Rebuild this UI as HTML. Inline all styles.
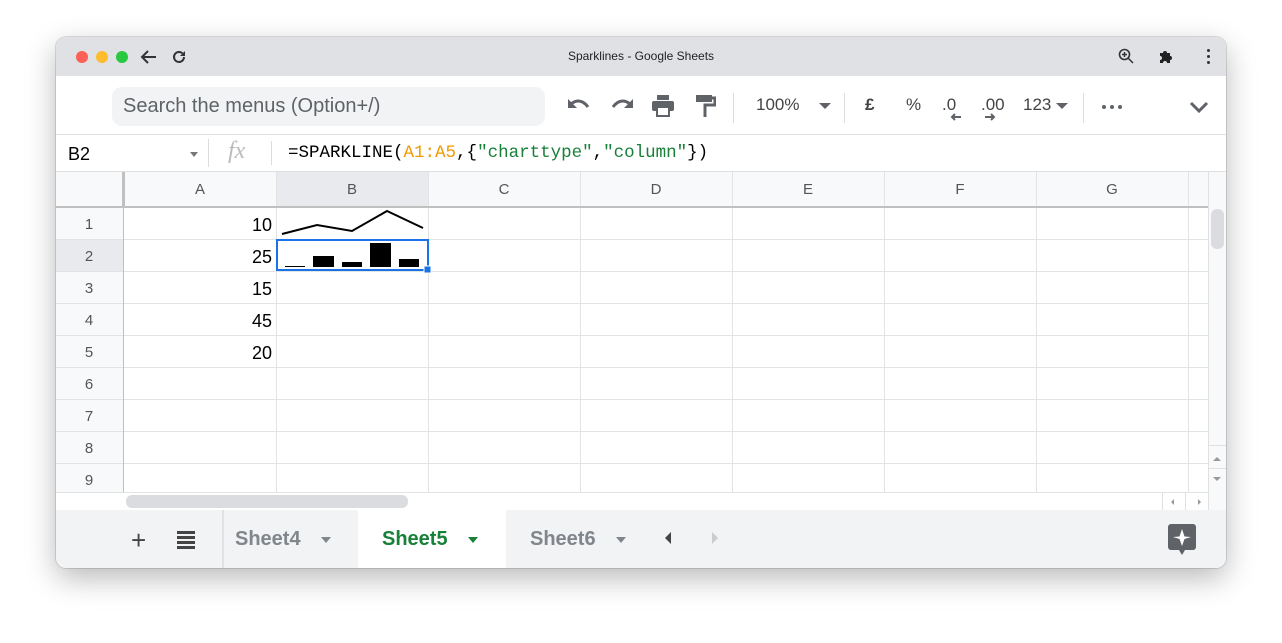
<!DOCTYPE html>
<html><head><meta charset="utf-8"><style>
*{margin:0;padding:0;box-sizing:border-box}
body{width:1282px;height:643px;background:#fff;font-family:"Liberation Sans",Arial,sans-serif;position:relative;overflow:hidden}
.win{position:absolute;left:56px;top:37px;width:1170px;height:531px;border-radius:10px;overflow:hidden;background:#fff;box-shadow:0 10px 30px rgba(0,0,0,.28),0 0 0 1px rgba(0,0,0,.12)}
.a{position:absolute}
.title{left:0;top:0;width:1170px;height:39px;background:#dfe1e5}
.tb{color:#444;font-size:17px}
.cell{position:absolute;font-size:18px;color:#000;text-align:right}
.rh{position:absolute;left:0;width:66px;text-align:center;font-size:15px;color:#555}
.ch{position:absolute;top:144px;font-size:15px;color:#555;text-align:center;width:152px}
</style></head><body>
<div class="win">
 <div class="a title"></div>
 <div class="a" style="left:20px;top:14px;width:12px;height:12px;border-radius:50%;background:#fe5f57"></div>
 <div class="a" style="left:40px;top:14px;width:12px;height:12px;border-radius:50%;background:#febc2e"></div>
 <div class="a" style="left:60px;top:14px;width:12px;height:12px;border-radius:50%;background:#28c840"></div>
 <svg class="a" style="left:84px;top:11px" width="18" height="18" viewBox="0 0 18 18"><path d="M16 9H3M8 3L2 9l6 6" stroke="#333" stroke-width="2" fill="none"/></svg>
 <svg class="a" style="left:114px;top:11px" width="18" height="18" viewBox="0 0 18 18"><path d="M14 9a5 5 0 1 1-1.5-3.6" stroke="#333" stroke-width="2" fill="none"/><path d="M15 3v5h-5z" fill="#333"/></svg>
 <div class="a" style="left:0;width:1170px;top:12px;text-align:center;font-size:12px;color:#222">Sparklines - Google Sheets</div>
 <svg class="a" style="left:1062px;top:11px" width="16" height="16" viewBox="0 0 16 16"><circle cx="6.5" cy="6.5" r="5" stroke="#333" stroke-width="1.6" fill="none"/><path d="M10 10l5 5M6.5 4v5M4 6.5h5" stroke="#333" stroke-width="1.5"/></svg>
 <svg class="a" style="left:1102px;top:11px" width="16" height="16" viewBox="0 0 16 16"><path d="M2 5h3a2 2 0 1 1 4 0h3v3a2 2 0 1 1 0 4v3H9a2 2 0 1 0-4 0H2v-3a2 2 0 1 0 0-4z" fill="#222"/></svg>
 <div class="a" style="left:1151px;top:12px;width:3px;height:3px;background:#333;border-radius:50%;box-shadow:0 6px 0 #333,0 12px 0 #333"></div>
 <div class="a" style="left:0;top:39px;width:1170px;height:59px;background:#fff;border-bottom:1px solid #e0e0e0"></div>
 <div class="a" style="left:56px;top:50px;width:433px;height:39px;background:#f1f3f4;border-radius:10px;font-size:20px;color:#5f6368;padding:8px 11px">Search the menus (Option+/)</div>
 <svg class="a" style="left:510px;top:58px" width="26" height="20" viewBox="0 0 26 20"><path d="M4 10c6-6 13-5 18 2" stroke="#5f6368" stroke-width="3" fill="none"/><path d="M2 4v9h9z" fill="#5f6368"/></svg>
 <svg class="a" style="left:553px;top:58px" width="26" height="20" viewBox="0 0 26 20"><path d="M22 10c-6-6-13-5-18 2" stroke="#5f6368" stroke-width="3" fill="none"/><path d="M24 4v9h-9z" fill="#5f6368"/></svg>
 <svg class="a" style="left:595px;top:58px" width="24" height="22" viewBox="0 0 24 22"><rect x="6" y="0" width="12" height="5" fill="#5f6368"/><rect x="1" y="6" width="22" height="10" rx="2" fill="#5f6368"/><rect x="6" y="12" width="12" height="9" fill="#fff" stroke="#5f6368" stroke-width="2"/></svg>
 <svg class="a" style="left:638px;top:57px" width="22" height="24" viewBox="0 0 22 24"><rect x="2" y="1" width="16" height="7" fill="#5f6368"/><path d="M18 4h3v7h-10v12" stroke="#5f6368" stroke-width="3" fill="none"/></svg>
 <div class="a" style="left:677px;top:56px;width:1px;height:30px;background:#dadce0"></div>
 <div class="a tb" style="left:700px;top:58px">100%</div>
 <div class="a" style="left:763px;top:66px;border:6px solid transparent;border-top:6px solid #5f6368"></div>
 <div class="a" style="left:788px;top:56px;width:1px;height:30px;background:#dadce0"></div>
 <div class="a tb" style="left:809px;top:58px;font-weight:bold">£</div>
 <div class="a tb" style="left:850px;top:58px">%</div>
 <div class="a tb" style="left:886px;top:58px">.0</div>
 <div class="a tb" style="left:925px;top:58px">.00</div>
 <svg class="a" style="left:893px;top:75px" width="50" height="10" viewBox="0 0 50 10"><path d="M12 5H3M6 2L3 5l3 3" stroke="#5f6368" stroke-width="2" fill="none"/><path d="M36 5h9M42 2l3 3-3 3" stroke="#5f6368" stroke-width="2" fill="none"/></svg>
 <div class="a tb" style="left:967px;top:58px">123</div>
 <div class="a" style="left:1000px;top:66px;border:6px solid transparent;border-top:6px solid #5f6368"></div>
 <div class="a" style="left:1027px;top:56px;width:1px;height:30px;background:#dadce0"></div>
 <div class="a" style="left:1046px;top:68px;width:4px;height:4px;border-radius:50%;background:#5f6368;box-shadow:8px 0 0 #5f6368,16px 0 0 #5f6368"></div>
 <svg class="a" style="left:1133px;top:63px" width="20" height="14" viewBox="0 0 20 14"><path d="M2 3l8 8 8-8" stroke="#5f6368" stroke-width="3" fill="none"/></svg>
 <div class="a" style="left:0;top:98px;width:1170px;height:37px;background:#fff;border-bottom:1px solid #e0e0e0"></div>
 <div class="a" style="left:12px;top:107px;font-size:18px;color:#000">B2</div>
 <div class="a" style="left:134px;top:115px;border:4px solid transparent;border-top:5px solid #777"></div>
 <div class="a" style="left:152px;top:102px;width:1px;height:28px;background:#dadce0"></div>
 <div class="a" style="left:172px;top:101px;font-family:'Liberation Serif',serif;font-style:italic;font-size:24px;color:#bbb">fx</div>
 <div class="a" style="left:215px;top:104px;width:1px;height:24px;background:#dadce0"></div>
 <div class="a" style="left:232px;top:106px;font-family:'Liberation Mono',monospace;font-size:17.5px;color:#000;letter-spacing:0">=SPARKLINE(<span style="color:#f29900">A1:A5</span>,{<span style="color:#188038">"charttype"</span>,<span style="color:#188038">"column"</span>})</div>
 <svg class="a" style="left:0;top:135px" width="1170" height="338">
  <rect x="0" y="0" width="1152" height="35" fill="#f8f9fa"/>
  <rect x="0" y="35" width="68" height="285" fill="#f8f9fa"/>
  <rect x="220" y="0" width="152" height="35" fill="#e8eaed"/>
  <rect x="0" y="67" width="68" height="32" fill="#e8eaed"/>
  <g stroke="#e2e3e3" stroke-width="1">
   <line x1="220.5" y1="0" x2="220.5" y2="320"/><line x1="372.5" y1="0" x2="372.5" y2="320"/><line x1="524.5" y1="0" x2="524.5" y2="320"/><line x1="676.5" y1="0" x2="676.5" y2="320"/><line x1="828.5" y1="0" x2="828.5" y2="320"/><line x1="980.5" y1="0" x2="980.5" y2="320"/><line x1="1132.5" y1="0" x2="1132.5" y2="320"/>
   <line x1="0" y1="67.5" x2="1152" y2="67.5"/><line x1="0" y1="99.5" x2="1152" y2="99.5"/><line x1="0" y1="131.5" x2="1152" y2="131.5"/><line x1="0" y1="163.5" x2="1152" y2="163.5"/><line x1="0" y1="195.5" x2="1152" y2="195.5"/><line x1="0" y1="227.5" x2="1152" y2="227.5"/><line x1="0" y1="259.5" x2="1152" y2="259.5"/><line x1="0" y1="291.5" x2="1152" y2="291.5"/>
   <line x1="0" y1="320.5" x2="1170" y2="320.5"/>
  </g>
  <rect x="66" y="0" width="3" height="35" fill="#c0c0c0"/>
  <line x1="0" y1="35" x2="1152" y2="35" stroke="#c0c0c0" stroke-width="2"/>
  <line x1="67.5" y1="35" x2="67.5" y2="320" stroke="#c0c0c0"/>
  <rect x="1152" y="0" width="18" height="338" fill="#f8f9fa"/>
  <line x1="1152.5" y1="0" x2="1152.5" y2="338" stroke="#e0e0e0"/>
  <rect x="1155" y="37" width="13" height="40" rx="6" fill="#dadce0"/>
  <line x1="1152" y1="273.5" x2="1170" y2="273.5" stroke="#e0e0e0"/>
  <line x1="1152" y1="296.5" x2="1170" y2="296.5" stroke="#e0e0e0"/>
  <path d="M1157 289l4-4 4 4z M1157 305l4 4 4-4z" fill="#999"/>
  <rect x="0" y="321" width="1152" height="17" fill="#fff"/>
  <rect x="70" y="323" width="282" height="13" rx="6" fill="#dadce0"/>
  <line x1="1106.5" y1="321" x2="1106.5" y2="338" stroke="#e0e0e0"/>
  <line x1="1129.5" y1="321" x2="1129.5" y2="338" stroke="#e0e0e0"/>
  <path d="M1115 330l3-3v6z M1142 327l3 3-3 3z" fill="#999"/>
  <polyline points="226,62 261,53 296,59 331,39 367,56" fill="none" stroke="#000" stroke-width="2"/>
  <rect x="229" y="94" width="20" height="1" fill="#000"/>
  <rect x="257" y="84" width="21" height="11" fill="#000"/>
  <rect x="286" y="90" width="20" height="5" fill="#000"/>
  <rect x="314" y="71" width="21" height="24" fill="#000"/>
  <rect x="343" y="87" width="20" height="8" fill="#000"/>
  <rect x="221" y="68" width="151" height="30" fill="none" stroke="#1a73e8" stroke-width="2"/>
  <rect x="368" y="94" width="7" height="7" fill="#1a73e8" stroke="#fff" stroke-width="1"/>
 </svg>
 <div class="ch" style="left:68px">A</div><div class="ch" style="left:220px">B</div><div class="ch" style="left:372px">C</div><div class="ch" style="left:524px">D</div><div class="ch" style="left:676px">E</div><div class="ch" style="left:828px">F</div><div class="ch" style="left:980px">G</div>
 <div class="rh" style="top:179px">1</div><div class="rh" style="top:211px">2</div><div class="rh" style="top:243px">3</div><div class="rh" style="top:275px">4</div><div class="rh" style="top:307px">5</div><div class="rh" style="top:339px">6</div><div class="rh" style="top:371px">7</div><div class="rh" style="top:403px">8</div><div class="rh" style="top:435px">9</div>
 <div class="cell" style="left:68px;width:148px;top:178px">10</div>
 <div class="cell" style="left:68px;width:148px;top:210px">25</div>
 <div class="cell" style="left:68px;width:148px;top:242px">15</div>
 <div class="cell" style="left:68px;width:148px;top:274px">45</div>
 <div class="cell" style="left:68px;width:148px;top:306px">20</div>
 <div class="a" style="left:0;top:473px;width:1170px;height:58px;background:#f1f3f4"></div>
 <div class="a" style="left:166px;top:473px;width:2px;height:58px;background:#e2e2e2"></div>
 <div class="a" style="left:302px;top:473px;width:148px;height:58px;background:#fff"></div>
 <div class="a" style="left:75px;top:488px;font-size:26px;color:#444">+</div>
 <div class="a" style="left:121px;top:494px;width:18px;height:3px;background:#444;box-shadow:0 5px 0 #444,0 10px 0 #444,0 15px 0 #444"></div>
 <div class="a" style="left:179px;top:491px;font-size:20px;color:#80868b;font-weight:bold">Sheet4</div>
 <div class="a" style="left:265px;top:500px;border:5px solid transparent;border-top:6px solid #80868b"></div>
 <div class="a" style="left:326px;top:491px;font-size:20px;color:#188038;font-weight:bold">Sheet5</div>
 <div class="a" style="left:412px;top:500px;border:5px solid transparent;border-top:6px solid #188038"></div>
 <div class="a" style="left:474px;top:491px;font-size:20px;color:#80868b;font-weight:bold">Sheet6</div>
 <div class="a" style="left:560px;top:500px;border:5px solid transparent;border-top:6px solid #80868b"></div>
 <div class="a" style="left:609px;top:495px;border:6px solid transparent;border-right:6px solid #444;border-left:0"></div>
 <div class="a" style="left:656px;top:495px;border:6px solid transparent;border-left:6px solid #ccc;border-right:0"></div>
 <svg class="a" style="left:1111px;top:486px" width="30" height="34" viewBox="0 0 30 34"><rect x="1" y="1" width="28" height="26" rx="3" fill="#5f6368"/><path d="M12 27l3 5 3-5z" fill="#5f6368"/><path d="M15 6l2.5 7.5L24 14l-6.5 2L15 23l-2.5-7L6 14l6.5-.5z" fill="#fff"/></svg>
</div>
</body></html>
